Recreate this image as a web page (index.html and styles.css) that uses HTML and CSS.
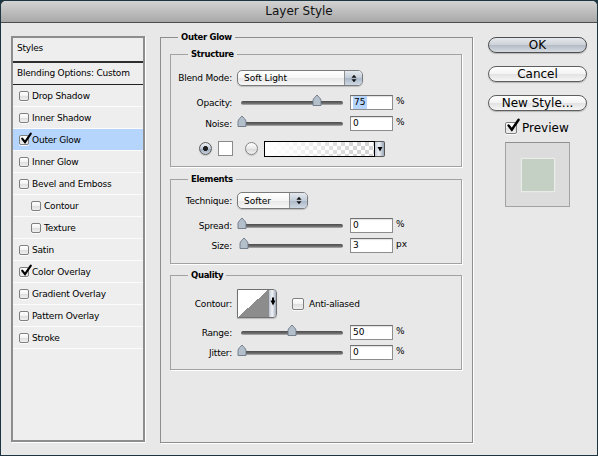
FILE: index.html
```html
<!DOCTYPE html>
<html>
<head>
<meta charset="utf-8">
<title>Layer Style</title>
<link rel="stylesheet" href="styles.css">
</head>
<body>
<div class="window">
  <div class="titlebar">Layer Style</div>
  <div class="content">

    <div class="styles-list">
      <div class="list-head">Styles</div>
      <div class="list-blend">Blending Options: Custom</div>
      <div class="item"><span class="cb"></span>Drop Shadow</div>
      <div class="item"><span class="cb"></span>Inner Shadow</div>
      <div class="item active"><span class="cb"><svg class="tick" viewBox="0 0 12 12"><path d="M2.2 5.6 L5 9.2 L10.8 0.6" /></svg></span>Outer Glow</div>
      <div class="item"><span class="cb"></span>Inner Glow</div>
      <div class="item"><span class="cb"></span>Bevel and Emboss</div>
      <div class="item sub"><span class="cb"></span>Contour</div>
      <div class="item sub"><span class="cb"></span>Texture</div>
      <div class="item"><span class="cb"></span>Satin</div>
      <div class="item"><span class="cb"><svg class="tick" viewBox="0 0 12 12"><path d="M2.2 5.6 L5 9.2 L10.8 0.6" /></svg></span>Color Overlay</div>
      <div class="item"><span class="cb"></span>Gradient Overlay</div>
      <div class="item"><span class="cb"></span>Pattern Overlay</div>
      <div class="item"><span class="cb"></span>Stroke</div>
    </div>

    <fieldset class="group main">
      <legend>Outer Glow</legend>

      <fieldset class="group sub-group structure">
        <legend>Structure</legend>
        <div class="row r-popup">
          <span class="lbl">Blend Mode:</span>
          <div class="popup blend">
            <span class="popup-text">Soft Light</span>
            <span class="popup-arrows"><svg viewBox="0 0 7 10"><path d="M3.5 0.5 L6.5 4 H0.5 Z M3.5 9.5 L6.5 6 H0.5 Z" /></svg></span>
          </div>
        </div>
        <div class="row r-opacity">
          <span class="lbl">Opacity:</span>
          <div class="slider"><div class="track"></div><svg class="thumb" style="left:75%" viewBox="0 0 10 12"><path d="M1 11.5 V6.5 C1 4.8 3.8 2.2 5 1 C6.2 2.2 9 4.8 9 6.5 V11.5 Z" /></svg></div>
          <div class="field"><span class="selected">75</span></div>
          <span class="unit">%</span>
        </div>
        <div class="row r-noise">
          <span class="lbl">Noise:</span>
          <div class="slider"><div class="track"></div><svg class="thumb" style="left:0%" viewBox="0 0 10 12"><path d="M1 11.5 V6.5 C1 4.8 3.8 2.2 5 1 C6.2 2.2 9 4.8 9 6.5 V11.5 Z" /></svg></div>
          <div class="field">0</div>
          <span class="unit">%</span>
        </div>
        <div class="row r-color">
          <span class="radio on"></span>
          <span class="swatch"></span>
          <span class="radio"></span>
          <div class="gradient-pick">
            <span class="gradient"></span>
            <span class="gradient-arrow"><svg viewBox="0 0 6 6"><path d="M0.5 1 H5.5 L3 5.5 Z" /></svg></span>
          </div>
        </div>
      </fieldset>

      <fieldset class="group sub-group elements">
        <legend>Elements</legend>
        <div class="row r-popup">
          <span class="lbl">Technique:</span>
          <div class="popup technique">
            <span class="popup-text">Softer</span>
            <span class="popup-arrows"><svg viewBox="0 0 7 10"><path d="M3.5 0.5 L6.5 4 H0.5 Z M3.5 9.5 L6.5 6 H0.5 Z" /></svg></span>
          </div>
        </div>
        <div class="row r-spread">
          <span class="lbl">Spread:</span>
          <div class="slider"><div class="track"></div><svg class="thumb" style="left:0%" viewBox="0 0 10 12"><path d="M1 11.5 V6.5 C1 4.8 3.8 2.2 5 1 C6.2 2.2 9 4.8 9 6.5 V11.5 Z" /></svg></div>
          <div class="field">0</div>
          <span class="unit">%</span>
        </div>
        <div class="row r-size">
          <span class="lbl">Size:</span>
          <div class="slider"><div class="track"></div><svg class="thumb" style="left:2%" viewBox="0 0 10 12"><path d="M1 11.5 V6.5 C1 4.8 3.8 2.2 5 1 C6.2 2.2 9 4.8 9 6.5 V11.5 Z" /></svg></div>
          <div class="field">3</div>
          <span class="unit">px</span>
        </div>
      </fieldset>

      <fieldset class="group sub-group quality">
        <legend>Quality</legend>
        <div class="row r-contour">
          <span class="lbl">Contour:</span>
          <div class="contour">
            <span class="contour-curve"></span>
            <span class="contour-arrow"><svg viewBox="0 0 6 9"><path d="M2 0.5 H4 V3.5 H5.5 L3 8.5 L0.5 3.5 H2 Z" /></svg></span>
          </div>
          <span class="cb big"></span>
          <span class="check-label">Anti-aliased</span>
        </div>
        <div class="row r-range">
          <span class="lbl">Range:</span>
          <div class="slider"><div class="track"></div><svg class="thumb" style="left:50%" viewBox="0 0 10 12"><path d="M1 11.5 V6.5 C1 4.8 3.8 2.2 5 1 C6.2 2.2 9 4.8 9 6.5 V11.5 Z" /></svg></div>
          <div class="field">50</div>
          <span class="unit">%</span>
        </div>
        <div class="row r-jitter">
          <span class="lbl">Jitter:</span>
          <div class="slider"><div class="track"></div><svg class="thumb" style="left:0%" viewBox="0 0 10 12"><path d="M1 11.5 V6.5 C1 4.8 3.8 2.2 5 1 C6.2 2.2 9 4.8 9 6.5 V11.5 Z" /></svg></div>
          <div class="field">0</div>
          <span class="unit">%</span>
        </div>
      </fieldset>
    </fieldset>

    <div class="side">
      <div class="btn default">OK</div>
      <div class="btn">Cancel</div>
      <div class="btn last">New Style...</div>
      <div class="preview-check">
        <span class="cb large"><svg class="tick" viewBox="0 0 12 12"><path d="M2.2 5.6 L5 9.2 L10.8 0.6" /></svg></span>
        <span>Preview</span>
      </div>
      <div class="preview-box"><span class="preview-swatch"></span></div>
    </div>

  </div>
</div>
</body>
</html>
```

FILE: styles.css
```css
* { box-sizing: border-box; }

html, body { margin: 0; padding: 0; }

body {
  width: 598px;
  height: 456px;
  overflow: hidden;
  background: #1c3540;
  font-family: "DejaVu Sans", "Liberation Sans", sans-serif;
  font-size: 9px;
  color: #000;
}

.window {
  margin: 1px 1px 0 1px;
  width: 596px;
  height: 454px;
  background: #e8e8e8;
  border-radius: 5px 5px 0 0;
  overflow: hidden;
  display: flex;
  flex-direction: column;
}

.titlebar {
  flex: none;
  height: 22px;
  background: linear-gradient(#d3d3d3, #a8a8a8);
  border-bottom: 1px solid #4c4c4c;
  text-align: center;
  font-size: 12px;
  line-height: 21px;
  color: #111;
}

.content {
  flex: 1;
  display: flex;
  align-items: flex-start;
  padding: 8px 0 0 10px;
}

/* ---- styles list on the left ---- */
.styles-list {
  flex: none;
  margin-top: 5px;
  width: 134px;
  height: 406px;
  border: 2px solid #8d8d8d;
  background: #eeeeee;
  box-shadow: 1px 1px 0 #fff;
  letter-spacing: -0.2px;
}

.list-head {
  height: 25px;
  line-height: 20px;
  padding-left: 4px;
  border-bottom: 2px solid #2e2e2e;
}

.list-blend {
  height: 22px;
  line-height: 21px;
  padding-left: 4px;
  border-bottom: 1px solid #222;
}

.item {
  height: 22px;
  display: flex;
  align-items: center;
  padding-left: 6px;
  border-bottom: 1px solid #fbfbfb;
}

.item.sub { padding-left: 18px; }

.item.active { background: #b6d5fc; }

.item .cb { margin-right: 3px; }

.cb {
  position: relative;
  flex: none;
  width: 10px;
  height: 10px;
  border: 1px solid #7f7f7f;
  border-radius: 2px;
  background: linear-gradient(#ffffff, #f2f2f2 50%, #dedede 51%, #f0f0f0);
  box-shadow: 0 1px 0 rgba(255, 255, 255, 0.8);
}

.cb.big { width: 12px; height: 12px; margin-left: 15px; margin-right: 5px; }
.cb.large { width: 12px; height: 12px; }

.tick {
  position: absolute;
  left: 0;
  top: -3px;
  width: 12px;
  height: 12px;
  overflow: visible;
}

.tick path {
  fill: none;
  stroke: #000;
  stroke-width: 2.1;
  stroke-linecap: round;
}

.cb.large .tick { width: 14px; height: 14px; top: -4px; left: 0; }

/* ---- grouped settings in the middle ---- */
fieldset.group {
  margin: 0;
  padding: 0;
  min-width: 0;
  border: 1px solid #9c9c9c;
  box-shadow: 1px 1px 0 #fff;
}

fieldset.group > legend {
  font-weight: bold;
  font-size: 8.5px;
  letter-spacing: -0.3px;
  line-height: 12px;
  padding: 0 3px;
  margin-left: 17px;
}

fieldset.main {
  flex: none;
  margin-left: 15px;
  width: 313px;
  height: 412px;
  border-color: #8e8e8e;
}

fieldset.sub-group {
  margin: 0 10px 0 9px;
  border-color: #a2a2a2;
}

.structure { margin-top: 5px !important; padding-bottom: 10px !important; }
.elements { margin-top: 6px !important; padding-bottom: 10px !important; }
.quality { margin-top: 5px !important; padding-bottom: 9px !important; }

.row {
  display: flex;
  align-items: center;
  height: 15px;
}

.lbl {
  flex: none;
  width: 61px;
  text-align: right;
  letter-spacing: -0.2px;
}

.structure .r-popup { margin-top: 10px; height: 16px; }
.structure .r-opacity { margin-top: 9px; }
.structure .r-noise { margin-top: 6px; }
.structure .r-color { margin-top: 10px; padding-left: 28px; }

.elements .r-popup { margin-top: 7px; height: 17px; }
.elements .r-spread { margin-top: 9px; }
.elements .r-size { margin-top: 5px; }

.quality .r-contour { margin-top: 8px; height: 29px; }
.quality .r-range { margin-top: 7px; }
.quality .r-jitter { margin-top: 5px; }

/* pop-up menus */
.popup {
  flex: none;
  display: flex;
  height: 100%;
  margin-left: 5px;
  border: 1px solid #7a7a7a;
  border-radius: 5px;
  background: linear-gradient(#ffffff, #f6f6f6 50%, #e6e6e6 51%, #f7f7f7);
  box-shadow: 0 1px 1px rgba(0, 0, 0, 0.18);
}

.popup.blend { width: 126px; }
.popup.technique { width: 71px; }

.popup-text {
  flex: 1;
  padding-left: 6px;
  display: flex;
  align-items: center;
}

.popup-arrows {
  flex: none;
  width: 18px;
  border-left: 1px solid #8f8f8f;
  border-radius: 0 4px 4px 0;
  background: linear-gradient(#e4e9ef, #c3cdd9 50%, #aab7c8 51%, #cfd8e3);
  display: flex;
  align-items: center;
  justify-content: center;
}

.popup-arrows svg { width: 6px; height: 9px; }
.popup-arrows path { fill: #111; }

/* sliders */
.slider {
  position: relative;
  flex: none;
  width: 100px;
  height: 15px;
  margin-left: 10px;
  margin-right: 8px;
}

.track {
  position: absolute;
  left: -1px;
  right: -1px;
  top: 6px;
  height: 4px;
  border-radius: 2px;
  background: linear-gradient(#4c4c4c, #6e6e6e 60%, #b4b4b4);
}

.thumb {
  position: absolute;
  top: -1px;
  width: 10px;
  height: 12px;
  margin-left: -5px;
}

.thumb path {
  fill: #b4bfcc;
  stroke: #6c7684;
  stroke-width: 0.9;
}

/* numeric fields */
.field {
  flex: none;
  width: 43px;
  height: 15px;
  border: 1px solid #8d8d8d;
  border-top-color: #6f6f6f;
  background: #fff;
  box-shadow: inset 0 1px 1px rgba(0, 0, 0, 0.12);
  padding-left: 2px;
  line-height: 13px;
}

.selected {
  display: inline-block;
  background: #b5d5fe;
  padding: 0 2px 0 1px;
}

.unit { margin-left: 3px; margin-top: -3px; }

/* colour / gradient choice */
.radio {
  flex: none;
  width: 13px;
  height: 13px;
  border-radius: 50%;
  border: 1px solid #858585;
  background: linear-gradient(#ffffff, #e9e9e9 50%, #d6d6d6 51%, #f2f2f2);
  box-shadow: 0 1px 1px rgba(0, 0, 0, 0.15);
  margin-right: 6px;
}

.radio.on {
  border-color: #5c5c5c;
  background:
    radial-gradient(circle, #1f1f1f 0 2.2px, transparent 2.7px),
    linear-gradient(#eef1f5, #c2cad6 50%, #98a5b7 51%, #c9d2de);
}

.swatch {
  flex: none;
  width: 15px;
  height: 15px;
  border: 1px solid #8a8a8a;
  background: #fff;
  margin-right: 12px;
}

.gradient-pick {
  flex: none;
  display: flex;
  height: 16px;
  margin-left: 0;
}

.gradient {
  width: 111px;
  border: 1px solid #000;
  background:
    linear-gradient(to right, #fff 0%, rgba(255, 255, 255, 0.85) 20%, rgba(255, 255, 255, 0) 85%),
    conic-gradient(#d4d4d4 25%, #fff 0 50%, #d4d4d4 0 75%, #fff 0) 0 0 / 8px 8px;
}

.gradient-arrow {
  width: 10px;
  border: 1px solid #555;
  border-left: 0;
  border-radius: 0 2px 2px 0;
  background: linear-gradient(90deg, #c6ceda, #eef1f5 45%, #9aa6b6);
  display: flex;
  align-items: center;
  justify-content: center;
}

.gradient-arrow svg { width: 6px; height: 6px; }
.gradient-arrow path { fill: #000; }

/* contour picker */
.contour {
  flex: none;
  display: flex;
  width: 40px;
  height: 29px;
  margin-left: 5px;
  border: 1px solid #707070;
  border-radius: 0 4px 4px 0;
  overflow: hidden;
  box-shadow: 0 1px 1px rgba(0, 0, 0, 0.2);
}

.contour-curve {
  width: 30px;
  background: linear-gradient(to bottom right, #fff 50%, #8c8c8c 50%);
}

.contour-arrow {
  flex: 1;
  border-left: 1px solid #8a8a8a;
  background: linear-gradient(90deg, #b9c2ce, #f2f4f7 45%, #a4afbe);
  display: flex;
  align-items: center;
  justify-content: center;
}

.contour-arrow svg { width: 6px; height: 9px; margin-top: -4px; }
.contour-arrow path { fill: #000; }

.check-label { letter-spacing: -0.2px; }

/* buttons and preview on the right */
.side {
  flex: none;
  width: 99px;
  margin-left: 15px;
  margin-top: 6px;
  display: flex;
  flex-direction: column;
  font-size: 12px;
}

.btn {
  height: 16px;
  margin-bottom: 13px;
  border: 1px solid #5e5e5e;
  border-radius: 8px;
  background: linear-gradient(#ffffff, #f3f3f3 50%, #e2e2e2 51%, #f6f6f6);
  box-shadow: 0 1px 1px rgba(0, 0, 0, 0.22);
  text-align: center;
  line-height: 14px;
}

.btn.default {
  border-color: #4e4e4e;
  background: linear-gradient(#e6e9ed, #ccd1d8 50%, #b4bbc6 51%, #d6dbe1);
}

.btn.last { margin-bottom: 11px; }

.preview-check {
  display: flex;
  align-items: center;
  margin-left: 17px;
  height: 12px;
}

.preview-check .cb { margin-right: 5px; }

.preview-box {
  margin-top: 8px;
  margin-left: 17px;
  width: 65px;
  height: 65px;
  border: 1px solid #a3a3a3;
  border-top-color: #8f8f8f;
  background: #dcdcdc;
  display: flex;
  align-items: center;
  justify-content: center;
}

.preview-swatch {
  width: 32px;
  height: 32px;
  background: #c5d0c4;
  box-shadow: 0 0 1px 1px #e9ece8;
}
```
